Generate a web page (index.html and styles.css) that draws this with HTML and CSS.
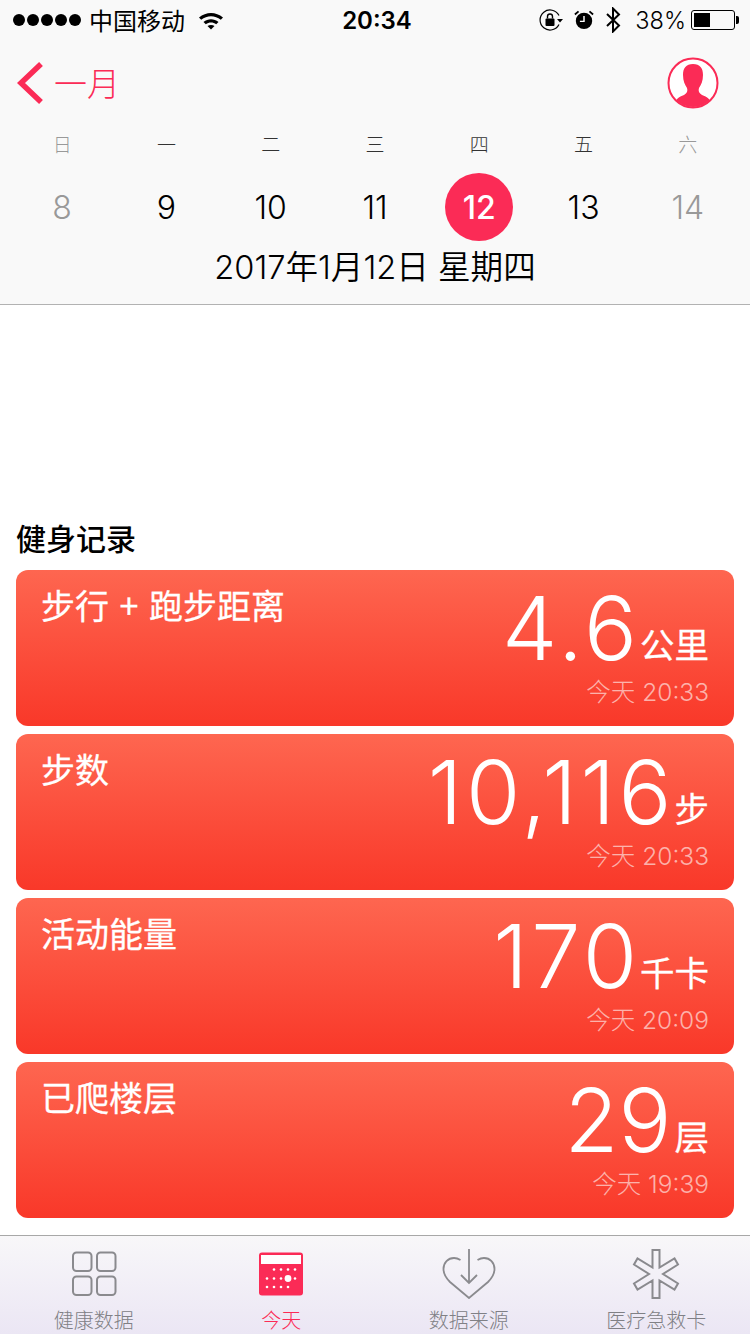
FILE: index.html
```html
<!DOCTYPE html>
<html lang="en">
<head>
    <meta charset="UTF-8">
    <meta name="viewport" content="width=device-width, initial-scale=1.0">
    <title>健康 - 今天</title>
    <link rel="stylesheet" href="styles.css">
</head>
<body>
    <div class="app">
        <header class="top">
            <div class="status">
                <div class="status-left">
                    <span class="dots"><i></i><i></i><i></i><i></i><i></i></span>
                    <span class="carrier">中国移动</span>
                    <svg class="wifi" width="26" height="20" viewBox="0 0 26 20">
                        <path d="M1 7.5 C8 1.5 18 1.5 25 7.5 L22.8 9.8 C17 5 9 5 3.2 9.8 Z" fill="#000"/>
                        <path d="M5.5 12 C10 8.3 16 8.3 20.5 12 L18.2 14.2 C15 11.8 11 11.8 7.8 14.2 Z" fill="#000"/>
                        <path d="M9.5 16 C11.5 14.6 14.5 14.6 16.5 16 L13 19.5 Z" fill="#000"/>
                    </svg>
                </div>
                <div class="clock">20:34</div>
                <div class="status-right">
                    <svg width="24" height="24" viewBox="0 0 24 24">
                        <path d="M20 7.5 A10 10 0 1 0 20 16.5" fill="none" stroke="#000" stroke-width="1.2"/>
                        <path d="M18 11 h6 l-3 3.5 Z" fill="#000"/>
                        <rect x="6.5" y="10.5" width="9" height="7.5" rx="1" fill="#000"/>
                        <path d="M8.5 10.5 V8.5 a2.5 2.5 0 0 1 5 0 V10.5" fill="none" stroke="#000" stroke-width="1.4"/>
                    </svg>
                    <svg class="alarm" width="20" height="22" viewBox="0 0 22 24">
                        <circle cx="11" cy="13" r="9" fill="#000"/>
                        <path d="M11 7.5 V13.5 H6.5" fill="none" stroke="#fff" stroke-width="1.6"/>
                        <path d="M1 6 L5 2.5 M21 6 L17 2.5" stroke="#000" stroke-width="2"/>
                    </svg>
                    <svg class="bt" width="16" height="26" viewBox="0 0 16 26">
                        <path d="M2 7 L14 18.5 L8 24.5 V1.5 L14 7.5 L2 19" fill="none" stroke="#000" stroke-width="2"/>
                    </svg>
                    <span class="pct">38%</span>
                    <span class="battery"><span class="battery-level"></span></span>
                </div>
            </div>

            <div class="nav">
                <div class="back">
                    <svg width="28" height="44" viewBox="0 0 28 44">
                        <path d="M25 3 L5 22 L25 41" fill="none" stroke="#fb2b56" stroke-width="5.5"/>
                    </svg>
                    <span>一月</span>
                </div>
                <svg class="avatar" width="52" height="52" viewBox="0 0 52 52">
                    <defs><clipPath id="avatarClip"><circle cx="26" cy="26" r="24"/></clipPath></defs>
                    <circle cx="26" cy="26" r="24.5" fill="#fff" stroke="#fb2b56" stroke-width="2"/>
                    <path clip-path="url(#avatarClip)" d="M26 7 C33 7 36 11 36 18 C36 24 34 28 32 31 C31 34 32 36 35 38 C40 40 44 42 46 50 H6 C8 42 12 40 17 38 C20 36 21 34 20 31 C18 28 16 24 16 18 C16 11 19 7 26 7 Z" fill="#fb2b56"/>
                </svg>
            </div>

            <div class="week">
                <span>日</span><span>一</span><span>二</span><span>三</span><span>四</span><span>五</span><span>六</span>
            </div>
            <div class="days">
                <span class="muted">8</span>
                <span>9</span>
                <span>10</span>
                <span>11</span>
                <span class="today">12</span>
                <span>13</span>
                <span class="muted">14</span>
            </div>
            <div class="full-date">2017年1月12日 星期四</div>
        </header>

        <main class="content">
            <h2 class="section-title">健身记录</h2>
            <div class="cards">
                <div class="card">
                    <div class="card-title">步行 + 跑步距离</div>
                    <div class="card-data">
                        <div class="value">4.6<span class="unit">公里</span></div>
                        <div class="time">今天 20:33</div>
                    </div>
                </div>
                <div class="card">
                    <div class="card-title">步数</div>
                    <div class="card-data">
                        <div class="value">10,116<span class="unit">步</span></div>
                        <div class="time">今天 20:33</div>
                    </div>
                </div>
                <div class="card">
                    <div class="card-title">活动能量</div>
                    <div class="card-data">
                        <div class="value">170<span class="unit">千卡</span></div>
                        <div class="time">今天 20:09</div>
                    </div>
                </div>
                <div class="card">
                    <div class="card-title">已爬楼层</div>
                    <div class="card-data">
                        <div class="value tight">29<span class="unit">层</span></div>
                        <div class="time">今天 19:39</div>
                    </div>
                </div>
            </div>
        </main>

        <nav class="tabs">
            <div class="tab">
                <div class="tab-icon">
                    <svg width="46" height="46" viewBox="0 0 46 46" fill="none" stroke="#8a8a8e" stroke-width="2">
                        <rect x="2" y="1.5" width="18.5" height="18.5" rx="3.5"/>
                        <rect x="26" y="1.5" width="18.5" height="18.5" rx="3.5"/>
                        <rect x="2" y="25.5" width="18.5" height="18.5" rx="3.5"/>
                        <rect x="26" y="25.5" width="18.5" height="18.5" rx="3.5"/>
                    </svg>
                </div>
                <span>健康数据</span>
            </div>
            <div class="tab active">
                <div class="tab-icon">
                    <svg width="46" height="46" viewBox="0 0 46 46">
                        <rect x="1" y="1.5" width="44" height="43" rx="3" fill="#fb2b56"/>
                        <rect x="3" y="4" width="40" height="9" fill="#fff"/>
                        <g fill="#fff">
                            <circle cx="16" cy="18.5" r="1.3"/><circle cx="23" cy="18.5" r="1.3"/><circle cx="30" cy="18.5" r="1.3"/><circle cx="37" cy="18.5" r="1.3"/>
                            <circle cx="9" cy="27.5" r="1.3"/><circle cx="16" cy="27.5" r="1.3"/><circle cx="23" cy="27.5" r="1.3"/><circle cx="30" cy="27.5" r="3.4"/><circle cx="37" cy="27.5" r="1.3"/>
                            <circle cx="9" cy="36" r="1.3"/><circle cx="16" cy="36" r="1.3"/><circle cx="23" cy="36" r="1.3"/><circle cx="30" cy="36" r="1.3"/>
                        </g>
                    </svg>
                </div>
                <span>今天</span>
            </div>
            <div class="tab">
                <div class="tab-icon">
                    <svg width="54" height="50" viewBox="0 0 54 50" fill="none" stroke="#8a8a8e" stroke-width="1.8">
                        <path d="M18.500 11 C16 9.500 14 9 12 9 C6 9 1.500 13.500 1.500 20 C1.500 25 4 29 8 33 L27 49 L46 33 C50 29 52.500 25 52.500 20 C52.500 13.500 48 9 42 9 C40 9 38 9.500 35.500 11"/>
                        <path d="M27 0 V34 M19 26 L27 34 L35 26"/>
                    </svg>
                </div>
                <span>数据来源</span>
            </div>
            <div class="tab">
                <div class="tab-icon">
                    <svg width="50" height="50" viewBox="0 0 50 50" fill="none" stroke="#8a8a8e" stroke-width="2">
                        <path d="M21.500 1 H28.500 V18.500 L43.500 9.500 L47 15.500 L32 25 L47 34.500 L43.500 40.500 L28.500 31.500 V49 H21.500 V31.500 L6.500 40.500 L3 34.500 L18 25 L3 15.500 L6.500 9.500 L21.500 18.500 Z"/>
                    </svg>
                </div>
                <span>医疗急救卡</span>
            </div>
        </nav>
    </div>
</body>
</html>
```

FILE: styles.css
```css
* {
    box-sizing: border-box;
    margin: 0;
    padding: 0;
}

body {
    font-family: 'Inter', 'Noto Sans CJK SC', sans-serif;
    background-color: white;
    color: #000;
}

.app {
    width: 750px;
    height: 1334px;
    display: flex;
    flex-direction: column;
    overflow: hidden;
}

.top {
    height: 305px;
    background-color: #f9f9f9;
    border-bottom: 1px solid #b2b2b2;
}

.status {
    height: 40px;
    padding: 0 10px 0 13px;
    display: flex;
    justify-content: space-between;
    align-items: center;
    position: relative;
}

.status-left,
.status-right {
    display: flex;
    align-items: center;
}

.dots {
    display: flex;
    gap: 2px;
}

.dots i {
    width: 12px;
    height: 12px;
    border-radius: 50%;
    background-color: #000;
}

.carrier {
    font-family: 'Noto Sans CJK SC', sans-serif;
    font-size: 24px;
    margin-left: 8px;
    margin-right: 13px;
    margin-bottom: 2px;
}

.clock {
    position: absolute;
    left: 4px;
    right: 0;
    top: 6px;
    text-align: center;
    font-size: 24px;
    font-weight: 600;
}

.status-right {
    gap: 11px;
}

.pct {
    font-size: 23.5px;
    font-weight: 300;
    margin-left: 3px;
}

.battery {
    width: 44px;
    height: 20px;
    border: 1px solid #000;
    border-radius: 3px;
    padding: 2px;
    margin-left: -6px;
    margin-right: 5px;
    position: relative;
    display: block;
}

.battery::after {
    content: '';
    position: absolute;
    right: -5px;
    top: 5px;
    width: 3px;
    height: 8px;
    background-color: #000;
    border-radius: 0 2px 2px 0;
}

.battery-level {
    display: block;
    width: 16px;
    height: 100%;
    background-color: #000;
}

.nav {
    height: 80px;
    padding: 0 31px 0 16px;
    display: flex;
    justify-content: space-between;
    align-items: center;
    margin-top: 3px;
}

.back {
    display: flex;
    align-items: center;
    gap: 10px;
    color: #fb2b56;
    font-family: 'Noto Sans CJK SC', sans-serif;
    font-size: 33px;
    font-weight: 300;
}

.back span {
    margin-bottom: 3px;
}

.week,
.days {
    display: grid;
    grid-template-columns: repeat(7, 1fr);
    padding: 0 10px;
    text-align: center;
}

.week {
    height: 28px;
    margin-top: 7px;
    line-height: 28px;
    font-family: 'Noto Sans CJK SC', sans-serif;
    font-size: 19px;
    font-weight: 300;
    color: #333;
}

.week span:first-child,
.week span:last-child {
    color: #999;
}

.days {
    margin-top: 15px;
    height: 68px;
    font-size: 32px;
    font-weight: 350;
}

.days span {
    line-height: 70px;
}

.days .muted {
    color: #999;
}

.days .today {
    justify-self: center;
    width: 68px;
    height: 68px;
    border-radius: 50%;
    background-color: #fb2b56;
    color: white;
    font-weight: 450;
}

.full-date {
    margin-top: 6px;
    text-align: center;
    font-size: 32.6px;
    line-height: 40px;
    font-weight: 350;
}

.content {
    flex: 1;
    padding: 0 16px 17px;
    display: flex;
    flex-direction: column;
    justify-content: flex-end;
}

.section-title {
    font-family: 'Noto Sans CJK SC', sans-serif;
    font-size: 30px;
    font-weight: 500;
    line-height: 40px;
    margin-bottom: 13px;
}

.cards {
    display: flex;
    flex-direction: column;
    gap: 8px;
}

.card {
    height: 156px;
    border-radius: 12px;
    background: linear-gradient(180deg, #fe6650, #f93829);
    color: white;
    padding: 16px 25px 0 25px;
    display: flex;
    justify-content: space-between;
}

.card-title {
    font-family: 'Noto Sans CJK SC', sans-serif;
    font-size: 34px;
    font-weight: 400;
    line-height: 38px;
    word-spacing: 3px;
    -webkit-text-stroke: 0.3px white;
}

.card-data {
    display: flex;
    flex-direction: column;
    align-items: flex-end;
}

.value {
    font-size: 88px;
    font-weight: 270;
    line-height: 84px;
    letter-spacing: 3.5px;
    white-space: nowrap;
}

.value.tight {
    letter-spacing: 0;
}

.unit {
    font-family: 'Noto Sans CJK SC', sans-serif;
    font-size: 34.5px;
    font-weight: 400;
    line-height: 1;
    letter-spacing: 0;
    margin-left: -0.5px;
    vertical-align: 2px;
    -webkit-text-stroke: 0.3px white;
}

.value.tight .unit {
    margin-left: 3px;
}

.time {
    font-size: 24.5px;
    font-weight: 300;
    line-height: 32px;
    margin-top: 6px;
    color: rgba(255,255,255,0.6);
}

.tabs {
    height: 99px;
    border-top: 1px solid #a8a8a8;
    background: linear-gradient(180deg, #f8f7f9, #ebe6f4);
    display: grid;
    grid-template-columns: repeat(4, 1fr);
}

.tab {
    display: flex;
    flex-direction: column;
    align-items: center;
    padding-top: 13px;
    color: #808085;
    font-family: 'Noto Sans CJK SC', sans-serif;
    font-size: 20px;
    font-weight: 300;
    line-height: 26px;
}

.tab-icon {
    height: 50px;
    margin-bottom: 8px;
    display: flex;
    align-items: center;
}

.tab.active {
    color: #fb2b56;
}
```
